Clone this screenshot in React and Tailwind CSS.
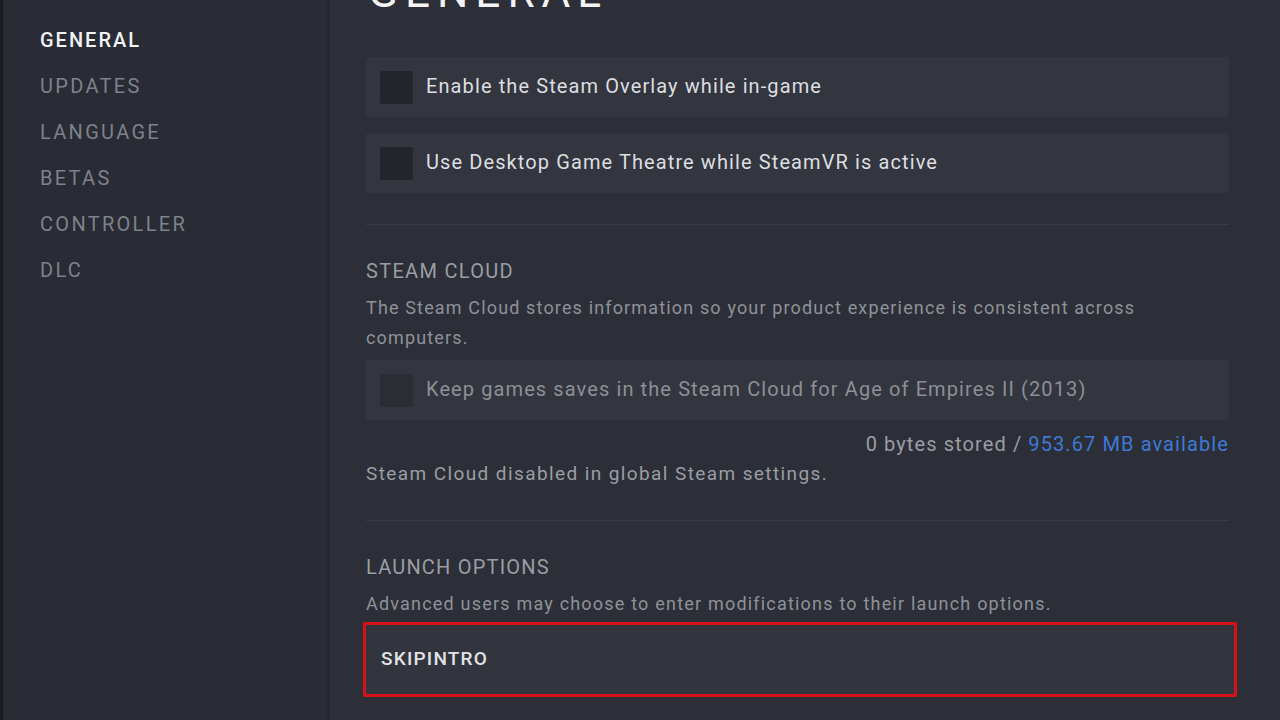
import React from "react";

const font = { fontFamily: "Roboto, 'Liberation Sans', sans-serif" };

function Checkbox({ disabled }) {
  return (
    <div
      className={`w-[33px] h-[33px] rounded-[3px] shrink-0 ${
        disabled ? "bg-[#2a2d34]" : "bg-[#22252c]"
      }`}
    />
  );
}

function CheckRow({ label, disabled, className = "" }) {
  return (
    <div
      className={`h-[60px] rounded-[3px] bg-[#33363e] flex items-center pl-[14px] gap-[13px] ${className}`}
    >
      <Checkbox disabled={disabled} />
      <span
        className={`text-[20px] tracking-[1.1px] whitespace-nowrap -mt-[2px] ${
          disabled ? "text-[#8c9096]" : "text-[#dcdee1]"
        }`}
      >
        {label}
      </span>
    </div>
  );
}

export default function App() {
  const nav = ["GENERAL", "UPDATES", "LANGUAGE", "BETAS", "CONTROLLER", "DLC"];
  return (
    <div
      className="w-[1280px] h-[720px] flex overflow-hidden bg-[#2c2f37]"
      style={font}
    >
      <div className="w-[3px] bg-[#191b20] shrink-0" />
      <div className="w-[324px] shrink-0 bg-[#292c34] pt-[17px] pl-[37px]">
        {nav.map((n, i) => (
          <div
            key={n}
            className={`h-[46px] flex items-center text-[20px] tracking-[2.3px] ${
              i === 0 ? "text-[#f2f3f4] font-medium tracking-[2px]" : "text-[#7e828a]"
            }`}
          >
            {n}
          </div>
        ))}
      </div>
      <div className="w-[3px] shrink-0 bg-[#25272e]" />
      <div className="flex-1 min-w-0 pl-[36px] pr-[51px] bg-[#2c2f37]">
        <div className="mt-[-29px] h-[42px] leading-[42px] text-[44px] tracking-[7px] text-[#f4f4f5] pl-[2px] whitespace-nowrap">
          GENERAL
        </div>
        <CheckRow
          className="mt-[44px]"
          label="Enable the Steam Overlay while in-game"
        />
        <CheckRow
          className="mt-[16px]"
          label="Use Desktop Game Theatre while SteamVR is active"
        />
        <div className="mt-[31px] h-px bg-[#383b43]" />
        <div className="mt-[32px] h-[28px] leading-[28px] text-[20px] tracking-[1.3px] text-[#9a9ea4]">
          STEAM CLOUD
        </div>
        <div className="mt-[8px] text-[18px] leading-[30px] tracking-[1.15px] text-[#8e9299] whitespace-nowrap">
          The Steam Cloud stores information so your product experience is
          consistent across
          <br />
          computers.
        </div>
        <CheckRow
          className="mt-[7px]"
          disabled
          label="Keep games saves in the Steam Cloud for Age of Empires II (2013)"
        />
        <div className="mt-[9px] text-right text-[20px] leading-[30px] tracking-[1.1px] text-[#9a9ea4] whitespace-nowrap">
          0 bytes stored /{" "}
          <span className="text-[#3f79d6]">953.67 MB available</span>
        </div>
        <div className="text-[19px] leading-[30px] tracking-[1.4px] text-[#9a9ea4] whitespace-nowrap">
          Steam Cloud disabled in global Steam settings.
        </div>
        <div className="mt-[31px] h-px bg-[#383b43]" />
        <div className="mt-[32px] h-[28px] leading-[28px] text-[20px] tracking-[1.2px] text-[#9a9ea4]">
          LAUNCH OPTIONS
        </div>
        <div className="mt-[8px] text-[18px] leading-[30px] tracking-[1.2px] text-[#8e9299] whitespace-nowrap">
          Advanced users may choose to enter modifications to their launch
          options.
        </div>
        <div className="mt-[3px] -ml-[3px] -mr-[8px] h-[75px] border-[3px] border-[#d5121a] rounded-[2px] bg-[#32353d] flex items-center pl-[15px]">
          <span className="text-[19px] font-medium tracking-[1.2px] text-[#e2e3e5]">
            SKIPINTRO
          </span>
        </div>
      </div>
    </div>
  );
}
